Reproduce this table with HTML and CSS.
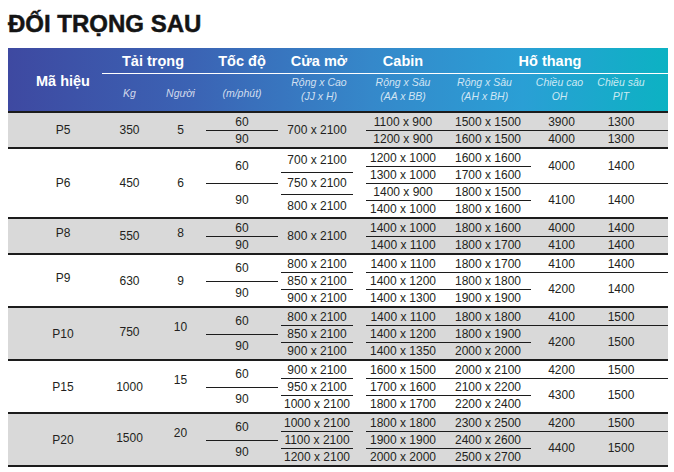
FILE: index.html
```html
<!DOCTYPE html>
<html lang="vi">
<head>
<meta charset="utf-8">
<title>Đối trọng sau</title>
<link rel="stylesheet" href="styles.css">
</head>
<body>
<div class="page">
  <h1 class="title">ĐỐI TRỌNG SAU</h1>
  <div class="table">
    <div class="head">
      <div class="h-ma">Mã hiệu</div>
      <div class="h-top h-tai">Tải trọng</div>
      <div class="h-top h-toc">Tốc độ</div>
      <div class="h-top h-cua">Cửa mở</div>
      <div class="h-top h-cab">Cabin</div>
      <div class="h-top h-ho">Hố thang</div>
      <div class="h-sub s-kg">Kg</div>
      <div class="h-sub s-ng">Người</div>
      <div class="h-sub s-toc">(m/phút)</div>
      <div class="h-sub two s-cua">Rộng x Cao<br>(JJ x H)</div>
      <div class="h-sub two s-cab">Rộng x Sâu<br>(AA x BB)</div>
      <div class="h-sub two s-hr">Rộng x Sâu<br>(AH x BH)</div>
      <div class="h-sub two s-oh">Chiều cao<br>OH</div>
      <div class="h-sub two s-pit">Chiều sâu<br>PIT</div>
    </div>

    <!-- P5 -->
    <div class="grp n2 gray">
      <div class="col c1"><div class="cell">P5</div></div>
      <div class="col c2"><div class="cell">350</div></div>
      <div class="col c3"><div class="cell">5</div></div>
      <div class="col c4"><div class="cell">60</div><div class="cell ln">90</div></div>
      <div class="col c5"><div class="cell">700 x 2100</div></div>
      <div class="col c6"><div class="cell">1100 x 900</div><div class="cell ln">1200 x 900</div></div>
      <div class="col c7"><div class="cell">1500 x 1500</div><div class="cell ln">1600 x 1500</div></div>
      <div class="col c8"><div class="cell">3900</div><div class="cell ln">4000</div></div>
      <div class="col c9"><div class="cell">1300</div><div class="cell ln">1300</div></div>
    </div>

    <!-- P6 -->
    <div class="grp n4">
      <div class="col c1"><div class="cell">P6</div></div>
      <div class="col c2"><div class="cell">450</div></div>
      <div class="col c3"><div class="cell">6</div></div>
      <div class="col c4"><div class="cell">60</div><div class="cell ln">90</div></div>
      <div class="col c5"><div class="cell">700 x 2100</div><div class="cell ln">750 x 2100</div><div class="cell ln">800 x 2100</div></div>
      <div class="col c6"><div class="cell">1200 x 1000</div><div class="cell ln">1300 x 1000</div><div class="cell ln">1400 x 900</div><div class="cell ln">1400 x 1000</div></div>
      <div class="col c7"><div class="cell">1600 x 1600</div><div class="cell ln">1700 x 1600</div><div class="cell ln">1800 x 1500</div><div class="cell ln">1800 x 1600</div></div>
      <div class="col c8"><div class="cell">4000</div><div class="cell ln">4100</div></div>
      <div class="col c9"><div class="cell">1400</div><div class="cell ln">1400</div></div>
    </div>

    <!-- P8 -->
    <div class="grp n2 gray">
      <div class="col c1"><div class="cell up2">P8</div></div>
      <div class="col c2"><div class="cell">550</div></div>
      <div class="col c3"><div class="cell up2">8</div></div>
      <div class="col c4"><div class="cell">60</div><div class="cell ln">90</div></div>
      <div class="col c5"><div class="cell">800 x 2100</div></div>
      <div class="col c6"><div class="cell">1400 x 1000</div><div class="cell ln">1400 x 1100</div></div>
      <div class="col c7"><div class="cell">1800 x 1600</div><div class="cell ln">1800 x 1700</div></div>
      <div class="col c8"><div class="cell">4000</div><div class="cell ln">4100</div></div>
      <div class="col c9"><div class="cell">1400</div><div class="cell ln">1400</div></div>
    </div>

    <!-- P9 -->
    <div class="grp n3">
      <div class="col c1"><div class="cell up2">P9</div></div>
      <div class="col c2"><div class="cell">630</div></div>
      <div class="col c3"><div class="cell">9</div></div>
      <div class="col c4"><div class="cell">60</div><div class="cell ln">90</div></div>
      <div class="col c5"><div class="cell">800 x 2100</div><div class="cell ln">850 x 2100</div><div class="cell ln">900 x 2100</div></div>
      <div class="col c6"><div class="cell">1400 x 1100</div><div class="cell ln">1400 x 1200</div><div class="cell ln">1400 x 1300</div></div>
      <div class="col c7"><div class="cell">1800 x 1700</div><div class="cell ln">1800 x 1800</div><div class="cell ln">1900 x 1900</div></div>
      <div class="col c8"><div class="cell">4100</div><div class="cell ln s2">4200</div></div>
      <div class="col c9"><div class="cell">1400</div><div class="cell ln s2">1400</div></div>
    </div>

    <!-- P10 -->
    <div class="grp n3 gray">
      <div class="col c1"><div class="cell">P10</div></div>
      <div class="col c2"><div class="cell up1">750</div></div>
      <div class="col c3"><div class="cell up">10</div></div>
      <div class="col c4"><div class="cell">60</div><div class="cell ln">90</div></div>
      <div class="col c5"><div class="cell">800 x 2100</div><div class="cell ln">850 x 2100</div><div class="cell ln">900 x 2100</div></div>
      <div class="col c6"><div class="cell">1400 x 1100</div><div class="cell ln">1400 x 1200</div><div class="cell ln">1400 x 1350</div></div>
      <div class="col c7"><div class="cell">1800 x 1800</div><div class="cell ln">1800 x 1900</div><div class="cell ln">2000 x 2000</div></div>
      <div class="col c8"><div class="cell">4100</div><div class="cell ln s2">4200</div></div>
      <div class="col c9"><div class="cell">1500</div><div class="cell ln s2">1500</div></div>
    </div>

    <!-- P15 -->
    <div class="grp n3">
      <div class="col c1"><div class="cell">P15</div></div>
      <div class="col c2"><div class="cell">1000</div></div>
      <div class="col c3"><div class="cell up">15</div></div>
      <div class="col c4"><div class="cell">60</div><div class="cell ln">90</div></div>
      <div class="col c5"><div class="cell">900 x 2100</div><div class="cell ln">950 x 2100</div><div class="cell ln">1000 x 2100</div></div>
      <div class="col c6"><div class="cell">1600 x 1500</div><div class="cell ln">1700 x 1600</div><div class="cell ln">1800 x 1700</div></div>
      <div class="col c7"><div class="cell">2000 x 2100</div><div class="cell ln">2100 x 2200</div><div class="cell ln">2200 x 2400</div></div>
      <div class="col c8"><div class="cell">4200</div><div class="cell ln s2">4300</div></div>
      <div class="col c9"><div class="cell">1500</div><div class="cell ln s2">1500</div></div>
    </div>

    <!-- P20 -->
    <div class="grp n3 gray last">
      <div class="col c1"><div class="cell">P20</div></div>
      <div class="col c2"><div class="cell up1">1500</div></div>
      <div class="col c3"><div class="cell up">20</div></div>
      <div class="col c4"><div class="cell">60</div><div class="cell ln">90</div></div>
      <div class="col c5"><div class="cell">1000 x 2100</div><div class="cell ln">1100 x 2100</div><div class="cell ln">1200 x 2100</div></div>
      <div class="col c6"><div class="cell">1800 x 1800</div><div class="cell ln">1900 x 1900</div><div class="cell ln">2000 x 2000</div></div>
      <div class="col c7"><div class="cell">2300 x 2500</div><div class="cell ln">2400 x 2600</div><div class="cell ln">2500 x 2700</div></div>
      <div class="col c8"><div class="cell">4200</div><div class="cell ln s2">4400</div></div>
      <div class="col c9"><div class="cell">1500</div><div class="cell ln s2">1500</div></div>
    </div>
  </div>
</div>
</body>
</html>
```

FILE: styles.css
```css
* { box-sizing: border-box; }

body {
  margin: 0;
  background: #ffffff;
  font-family: "Liberation Sans", Arial, sans-serif;
  color: #231f20;
}

.page {
  padding: 0 6px 0 8px;
}

.title {
  margin: 10px 0 0;
  font-size: 24px;
  line-height: 28px;
  font-weight: 700;
  color: #141414;
  letter-spacing: 0;
  -webkit-text-stroke: 0.5px #141414;
}

.table {
  width: 660px;
  margin-top: 10px;
}

/* ---------- header ---------- */
.head {
  display: grid;
  grid-template-columns: 94px 55px 47px 76px 86px 74px 91px 61px 76px;
  grid-template-rows: 26px 37px;
  background: linear-gradient(90deg, #3e49a1 0%, #3b63b4 28%, #3588ca 55%, #2a9fd5 78%, #0cb2c3 100%);
  color: #ffffff;
}

.head > div {
  display: flex;
  align-items: center;
  justify-content: center;
  text-align: center;
}

.h-ma {
  grid-column: 1;
  grid-row: 1 / span 2;
  padding-left: 16px;
  font-size: 14.5px;
  font-weight: 700;
  padding-top: 3px;
}

.h-top {
  grid-row: 1;
  font-size: 14.5px;
  font-weight: 700;
  border-bottom: 1px solid #ffffff;
  padding-top: 1px;
}

.h-tai { grid-column: 2 / span 2; }
.h-toc { grid-column: 4; }
.h-cua { grid-column: 5; padding-right: 8px; }
.h-cab { grid-column: 6; }
.h-ho { grid-column: 7 / span 3; padding-right: 8px; }

.h-sub {
  grid-row: 2;
  font-size: 10.5px;
  font-style: italic;
  line-height: 14px;
  color: rgba(255, 255, 255, 0.78);
}

.h-sub.two { padding-bottom: 8px; }

.s-kg { grid-column: 2; }
.s-ng { grid-column: 3; }
.s-toc { grid-column: 4; }
.s-cua { grid-column: 5; padding-right: 8px; }
.s-cab { grid-column: 6; }
.s-hr { grid-column: 7; padding-right: 2px; }
.s-oh { grid-column: 8; padding-right: 4px; }
.s-pit { grid-column: 9; padding-right: 18px; }

/* ---------- body groups ---------- */
.grp {
  display: flex;
  border-top: 2px solid #1c1c1c;
  font-size: 12px;
  box-sizing: content-box;
}

.grp.last { border-bottom: 2px solid #1c1c1c; }

.n2 { height: 34px; }
.n3 { height: 51px; }
.n4 { height: 68px; }

.gray { background: #d9d9d9; }

.col {
  display: flex;
  flex-direction: column;
}

.c1 { width: 94px; padding-left: 16px; }
.c2 { width: 55px; }
.c3 { width: 47px; }
.c4 { width: 76px; padding: 0 2px; }
.c5 { width: 86px; padding: 0 13px 0 1px; }
.c6 { width: 74px; }
.c7 { width: 91px; }
.c7 .cell { padding-left: 5px; }
.c8 { width: 61px; }
.c9 { width: 76px; }
.c9 .cell { padding-right: 18px; }

.cell {
  flex: 1 1 0;
  min-height: 0;
  display: flex;
  align-items: center;
  justify-content: center;
  white-space: nowrap;
  line-height: 14px;
}

.s2 { flex-grow: 2; }

.ln {
  background: linear-gradient(#1c1c1c, #1c1c1c) left top / 100% 1px no-repeat;
}

.up { padding-bottom: 14px; }
.up1 { padding-bottom: 4px; }
.up2 { padding-bottom: 6px; }
```
